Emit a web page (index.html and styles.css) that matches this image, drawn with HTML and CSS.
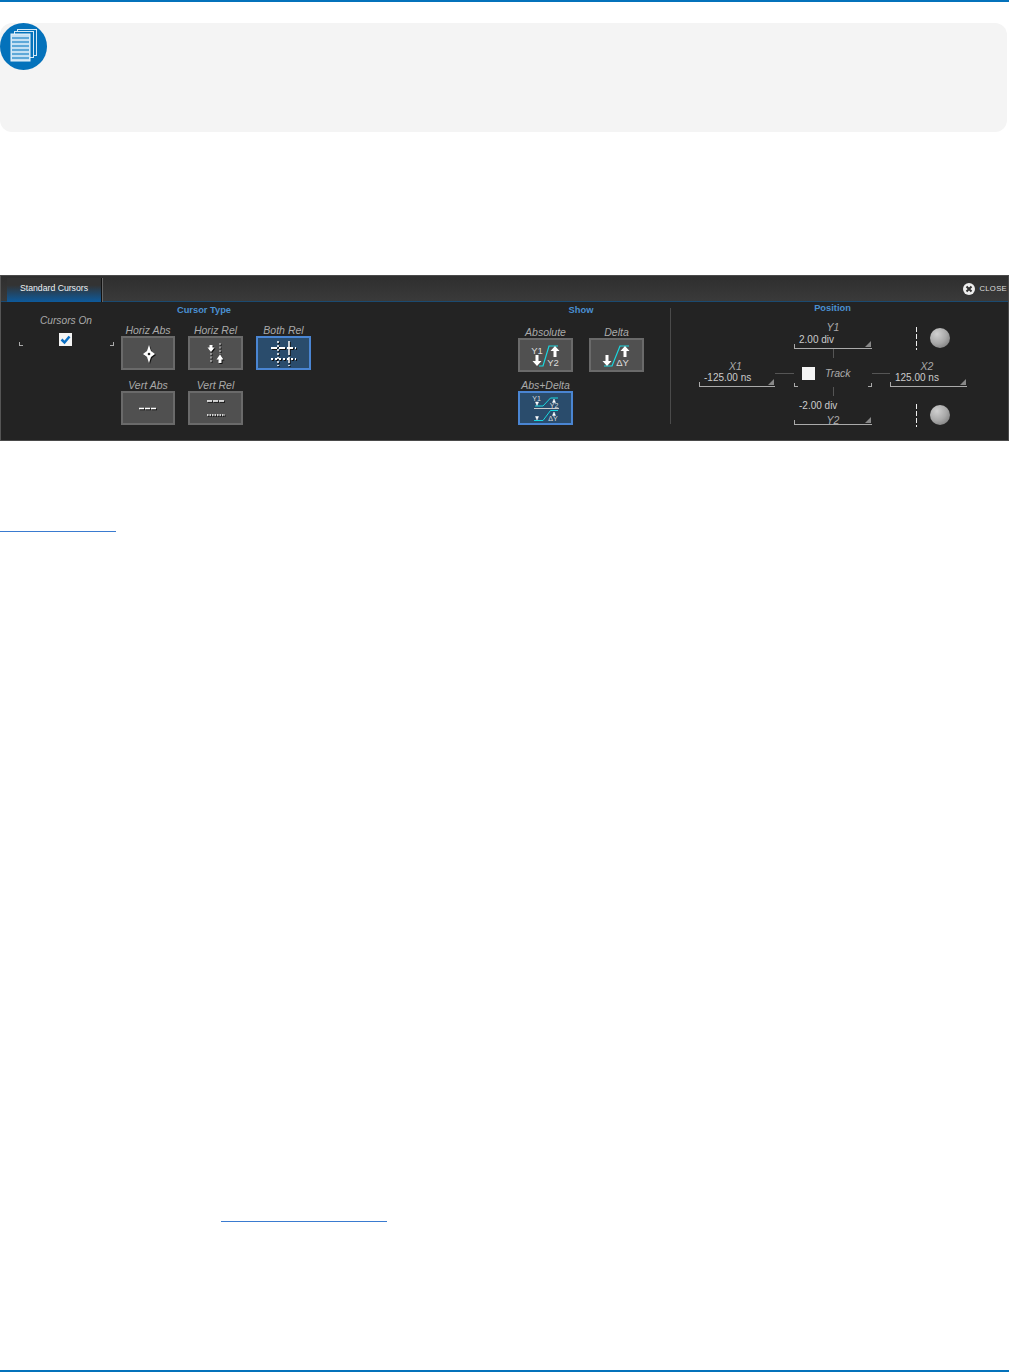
FILE: index.html
```html
<!DOCTYPE html>
<html lang="en">
<head>
    <meta charset="UTF-8">
    <title>Standard Cursors</title>
    <link rel="stylesheet" href="styles.css">
</head>
<body>
    <div class="top-bar"></div>

    <div class="note">
        <svg class="note-icon" viewBox="0 0 47 47" width="47" height="47">
            <circle cx="23.5" cy="23.5" r="23.5" fill="#0472bb"/>
            <rect x="17.500" y="6.500" width="19" height="26" fill="#0472bb" stroke="#d5e9f6"/>
            <rect x="14.500" y="8.500" width="19" height="26" fill="#0472bb" stroke="#d5e9f6"/>
            <rect x="11" y="11" width="19" height="27" fill="#c5e0f3" stroke="#eaf4fb"/>
            <path d="M12 15h17M12 19h17M12 23h17M12 27h17M12 31h17M12 35h17" stroke="#5fa8d8" stroke-width="2"/>
        </svg>
    </div>

    <div class="panel">
        <div class="panel-head">
            <div class="tab">Standard Cursors</div>
            <div class="close">
                <svg viewBox="0 0 12 12" width="12" height="12">
                    <circle cx="6" cy="6" r="6" fill="#eee"/>
                    <path d="M3.500 3.500l5 5M8.500 3.500l-5 5" stroke="#333" stroke-width="2"/>
                </svg>
                <span>CLOSE</span>
            </div>
        </div>
        <div class="panel-body">
            <div class="cursors-on">
                <div class="cap">Cursors On</div>
                <div class="check">
                    <svg viewBox="0 0 13 13" width="13" height="13">
                        <path d="M2.500 6.500l3 3 5-6" fill="none" stroke="#0a6fc4" stroke-width="2.500"/>
                    </svg>
                </div>
                <i class="tick tick-l"></i>
                <i class="tick tick-r"></i>
            </div>

            <div class="cursor-type">
                <div class="group-title">Cursor Type</div>
                <div class="btn-grid">
                    <div class="cell">
                        <div class="cap">Horiz Abs</div>
                        <div class="btn">
                            <svg class="shadowed" viewBox="0 0 54 34">
                                <path d="M28 9l2 6 4 3-4 3-2 6-2-6-4-3 4-3z" fill="#fff"/>
                                <circle cx="28" cy="18" r="1.300" fill="#222"/>
                            </svg>
                        </div>
                    </div>
                    <div class="cell">
                        <div class="cap">Horiz Rel</div>
                        <div class="btn">
                            <svg class="shadowed" viewBox="0 0 54 34">
                                <path d="M23 9v5" stroke="#fff" stroke-width="3"/>
                                <path d="M19.500 11.500h7l-3.500 4.500z" fill="#fff"/>
                                <path d="M23 17v10" stroke="#ddd" stroke-dasharray="2 1.500"/>
                                <path d="M32 7v11" stroke="#ddd" stroke-dasharray="2 1.500"/>
                                <path d="M32 22v5" stroke="#fff" stroke-width="3"/>
                                <path d="M28.500 23.500h7l-3.500-5z" fill="#fff"/>
                            </svg>
                        </div>
                    </div>
                    <div class="cell">
                        <div class="cap">Both Rel</div>
                        <div class="btn active">
                            <svg class="shadowed" viewBox="0 0 54 34">
                                <path d="M22 5v25" stroke="#fff" stroke-width="1.500" stroke-dasharray="2 2"/>
                                <path d="M33 5v25" stroke="#fff" stroke-width="1.500" stroke-dasharray="6 2"/>
                                <path d="M15 12h25" stroke="#fff" stroke-width="2" stroke-dasharray="6 2"/>
                                <path d="M15 23h25" stroke="#fff" stroke-width="2" stroke-dasharray="2 2"/>
                            </svg>
                        </div>
                    </div>
                    <div class="cell">
                        <div class="cap">Vert Abs</div>
                        <div class="btn">
                            <svg class="shadowed" viewBox="0 0 54 34">
                                <path d="M18 17.500h18" stroke="#fff" stroke-width="1.500" stroke-dasharray="5 1"/>
                            </svg>
                        </div>
                    </div>
                    <div class="cell">
                        <div class="cap">Vert Rel</div>
                        <div class="btn">
                            <svg class="shadowed" viewBox="0 0 54 34">
                                <path d="M19 10h18" stroke="#fff" stroke-width="1.500" stroke-dasharray="5 1"/>
                                <path d="M19 24h18" stroke="#fff" stroke-width="1.500" stroke-dasharray="1.500 1"/>
                            </svg>
                        </div>
                    </div>
                </div>
            </div>

            <div class="show">
                <div class="group-title">Show</div>
                <div class="btn-grid">
                    <div class="cell">
                        <div class="cap">Absolute</div>
                        <div class="btn">
                            <svg viewBox="0 0 54 34">
                                <path d="M21 28h4l6-20h9" fill="none" stroke="#19d8e0" stroke-width="1.200"/>
                                <path d="M17.500 17h3v6h3l-4.500 5-4.500-5h3z" fill="#fff"/>
                                <path d="M35.500 19h3v-6h3l-4.500-5-4.500 5h3z" fill="#fff"/>
                                <text class="ic-text" x="19" y="16" text-anchor="middle">Y1</text>
                                <text class="ic-text" x="35" y="28" text-anchor="middle">Y2</text>
                            </svg>
                        </div>
                    </div>
                    <div class="cell">
                        <div class="cap">Delta</div>
                        <div class="btn">
                            <svg viewBox="0 0 54 34">
                                <path d="M15 28h8l8-20h9" fill="none" stroke="#19d8e0" stroke-width="1.200"/>
                                <path d="M16.500 17h3v6h3l-4.500 5-4.500-5h3z" fill="#fff"/>
                                <path d="M34.500 19h3v-6h3l-4.500-5-4.500 5h3z" fill="#fff"/>
                                <text class="ic-text" x="33.500" y="28" text-anchor="middle">ΔY</text>
                            </svg>
                        </div>
                    </div>
                    <div class="cell">
                        <div class="cap">Abs+Delta</div>
                        <div class="btn active">
                            <svg viewBox="0 0 54 34">
                                <path d="M17 15h8l7.500-8h7.500M16 29.500h9l7.500-10h7.500" fill="none" stroke="#19d8e0"/>
                                <path d="M16 17.500h25" stroke="#ccc"/>
                                <path d="M17.500 11h3l-1.500 3.500zM17.500 25.500h3l-1.500 3.500zM34.500 11.500h3l-1.500-3.500zM34.500 24.500h3l-1.500-3.500z" fill="#fff" stroke="#fff" stroke-width="0.500"/>
                                <text class="ic-text small" x="18.500" y="10" text-anchor="middle">Y1</text>
                                <text class="ic-text small" x="36" y="16.500" text-anchor="middle">Y2</text>
                                <text class="ic-text small" x="35" y="29.500" text-anchor="middle">ΔY</text>
                            </svg>
                        </div>
                    </div>
                </div>
            </div>

            <div class="divider"></div>

            <div class="position">
                <div class="group-title">Position</div>
                <div class="pos-grid">
                    <div class="field y1">
                        <div class="cap">Y1</div>
                        <div class="val">2.00 div</div>
                    </div>
                    <div class="knob-row knob-top"><i class="dash"></i><i class="knob"></i></div>
                    <i class="conn-v conn-top"></i>

                    <div class="field x1">
                        <div class="cap">X1</div>
                        <div class="val">-125.00 ns</div>
                    </div>
                    <i class="conn-h conn-left"></i>
                    <div class="track">
                        <i class="track-box"></i>
                        <span class="track-text">Track</span>
                        <i class="tick tick-l"></i>
                        <i class="tick tick-r"></i>
                    </div>
                    <i class="conn-h conn-right"></i>
                    <div class="field x2">
                        <div class="cap">X2</div>
                        <div class="val">125.00 ns</div>
                    </div>

                    <i class="conn-v conn-bottom"></i>
                    <div class="field y2">
                        <div class="val">-2.00 div</div>
                        <div class="cap">Y2</div>
                    </div>
                    <div class="knob-row knob-bottom"><i class="dash"></i><i class="knob"></i></div>
                </div>
            </div>
        </div>
    </div>

    <a class="link link-one" href="#"></a>
    <a class="link link-two" href="#"></a>

    <div class="bottom-bar"></div>
</body>
</html>
```

FILE: styles.css
```css
* {
    box-sizing: border-box;
}
body {
    margin: 0;
    min-height: 100vh;
    display: flex;
    flex-direction: column;
    background-color: #fff;
    font-family: "Liberation Sans", Arial, sans-serif;
}
i {
    display: block;
}
.top-bar {
    height: 2px;
    background-color: #0472bb;
}
.bottom-bar {
    height: 2px;
    margin-top: auto;
    background-color: #0472bb;
}
.note {
    width: 1007px;
    height: 109px;
    margin-top: 21px;
    background-color: #f4f4f4;
    border-radius: 12px;
}
.note-icon {
    display: block;
}

/* scope panel */
.panel {
    height: 166px;
    margin-top: 143px;
    background-color: #232323;
    border: 1px solid #4a4a4a;
    border-left-color: #555;
    color: #bbb;
}
.panel-head {
    height: 26px;
    display: flex;
    justify-content: space-between;
    padding: 2px 1px 0 6px;
    background: linear-gradient(#2e2e2e, #3a3a3a);
    border-bottom: 1px solid #1b4a70;
}
.tab {
    width: 95px;
    height: 24px;
    padding-top: 5px;
    text-align: center;
    font-size: 8.700px;
    line-height: 11px;
    color: #f0f0f0;
    background: linear-gradient(#333 30%, #0d5a9c);
    border-right: 1px solid #111;
    box-shadow: 1px 0 0 #666;
}
.close {
    display: flex;
    align-items: center;
    gap: 4px;
    height: 20px;
    padding-top: 1px;
    font-size: 7.700px;
    letter-spacing: 0.3px;
    color: #ddd;
}
.close svg {
    display: block;
}
.panel-body {
    display: flex;
    align-items: flex-start;
}
.group-title {
    text-align: center;
    font-size: 9.300px;
    font-weight: bold;
    line-height: 11px;
    color: #4a90d2;
}
.cap {
    font-size: 10.500px;
    font-style: italic;
    line-height: 12px;
    text-align: center;
    color: #aaa;
}
.tick {
    position: absolute;
    width: 4px;
    height: 4px;
    border-bottom: 1px solid #aaa;
}
.tick-l {
    left: 1px;
    border-left: 1px solid #aaa;
}
.tick-r {
    right: 1px;
    border-right: 1px solid #aaa;
}

/* cursors on */
.cursors-on {
    position: relative;
    width: 97px;
    height: 31px;
    margin: 13px 0 0 17px;
}
.cursors-on .cap {
    font-size: 10.200px;
    padding-right: 1px;
}
.check {
    width: 13px;
    height: 13px;
    margin: 6px 0 0 41px;
    background-color: #f4f4f4;
}
.check svg {
    display: block;
}
.cursors-on .tick {
    top: 27px;
}

/* button groups */
.cursor-type {
    width: 190px;
    margin: 3px 0 0 6px;
}
.cursor-type .group-title {
    padding-right: 24px;
}
.cursor-type .cap {
    line-height: 11px;
}
.show {
    width: 126px;
    margin: 3px 0 0 207px;
}
.btn-grid {
    display: grid;
    grid-template-columns: 54px 55px 55px;
    column-gap: 13px;
    row-gap: 10px;
    margin-top: 9px;
}
.show .btn-grid {
    grid-template-columns: repeat(2, 55px);
    column-gap: 16px;
    row-gap: 7px;
    margin-top: 10px;
}
.btn {
    height: 34px;
    background-color: #505050;
    box-shadow: inset 0 0 0 2px #6a6a6a;
}
.btn svg {
    display: block;
    width: 54px;
    height: 34px;
}
.btn .shadowed {
    filter: drop-shadow(1px 1px 0 #111);
}
.btn.active {
    background-color: #2a4c6c;
    box-shadow: inset 0 0 0 2px #4a85d2;
}
.ic-text {
    font-size: 9.500px;
    fill: #ddd;
}
.ic-text.small {
    font-size: 7px;
}

.divider {
    width: 1px;
    height: 116px;
    margin: 6px 0 0 26px;
    background-color: #4a4a4a;
}

/* position */
.position {
    width: 270px;
    margin: 1px 0 0 28px;
}
.position .group-title {
    width: 267px;
}
.pos-grid {
    display: grid;
    grid-template-columns: 76px 19px 78px 18px 26px 51px;
    grid-template-rows: 27px 11px 27px 11px 27px;
    margin-top: 8px;
}
.field {
    position: relative;
    border-bottom: 1px solid #aaa;
}
.field::before {
    content: "";
    position: absolute;
    left: 0;
    bottom: 0;
    width: 1px;
    height: 4px;
    background-color: #aaa;
}
.field::after {
    content: "";
    position: absolute;
    right: 1px;
    bottom: 1px;
    border-style: solid;
    border-width: 0 0 6px 6px;
    border-color: transparent transparent #888;
}
.val {
    padding-left: 5px;
    font-size: 10px;
    line-height: 11px;
    color: #ccc;
}
.y1 {
    grid-column: 3;
    grid-row: 1;
}
.y2 {
    grid-column: 3;
    grid-row: 5;
}
.y1 .cap,
.y2 .cap {
    line-height: 11px;
}
.y1 .val {
    margin-top: 1px;
}
.y2 .val {
    margin-top: 2px;
    margin-bottom: 4px;
}
.x1 {
    grid-column: 1;
    grid-row: 3;
}
.x2 {
    grid-column: 5 / 7;
    grid-row: 3;
}
.x1 .cap,
.x2 .cap {
    padding-right: 3px;
}
.track {
    position: relative;
    grid-column: 3;
    grid-row: 3;
    display: flex;
    align-items: flex-start;
    padding: 7px 0 0 8px;
}
.track .tick {
    bottom: 0;
}
.track .tick-l {
    left: 0;
}
.track .tick-r {
    right: 0;
}
.track-box {
    width: 13px;
    height: 13px;
    background-color: #f4f4f4;
}
.track-text {
    margin-left: 10px;
    font-size: 10.500px;
    font-style: italic;
    line-height: 13px;
    color: #aaa;
}
.conn-v {
    grid-column: 3;
    width: 1px;
    height: 9px;
    margin-left: 39px;
    background-color: #555;
}
.conn-top {
    grid-row: 2;
}
.conn-bottom {
    grid-row: 4;
}
.conn-h {
    grid-row: 3;
    height: 1px;
    margin-top: 13px;
    background-color: #555;
}
.conn-left {
    grid-column: 2;
}
.conn-right {
    grid-column: 4;
}
.knob-row {
    grid-column: 5 / 7;
    display: flex;
    align-items: center;
    gap: 13px;
    padding-left: 26px;
}
.knob-top {
    grid-row: 1;
    padding-top: 5px;
}
.knob-bottom {
    grid-row: 5;
    padding-top: 7px;
}
.dash {
    width: 1px;
    height: 23px;
    background: repeating-linear-gradient(#eee 0 5px, transparent 5px 7px);
}
.knob {
    width: 20px;
    height: 20px;
    border-radius: 50%;
    background: radial-gradient(circle at 35% 30%, #d0d0d0, #a8a8a8 50%, #6a6a6a);
}

/* links with no readable text in the capture */
.link {
    display: block;
    height: 1px;
    background-color: #3a7bd0;
}
.link-one {
    width: 116px;
    margin-top: 90px;
}
.link-two {
    width: 166px;
    margin: 689px 0 0 221px;
}
```
